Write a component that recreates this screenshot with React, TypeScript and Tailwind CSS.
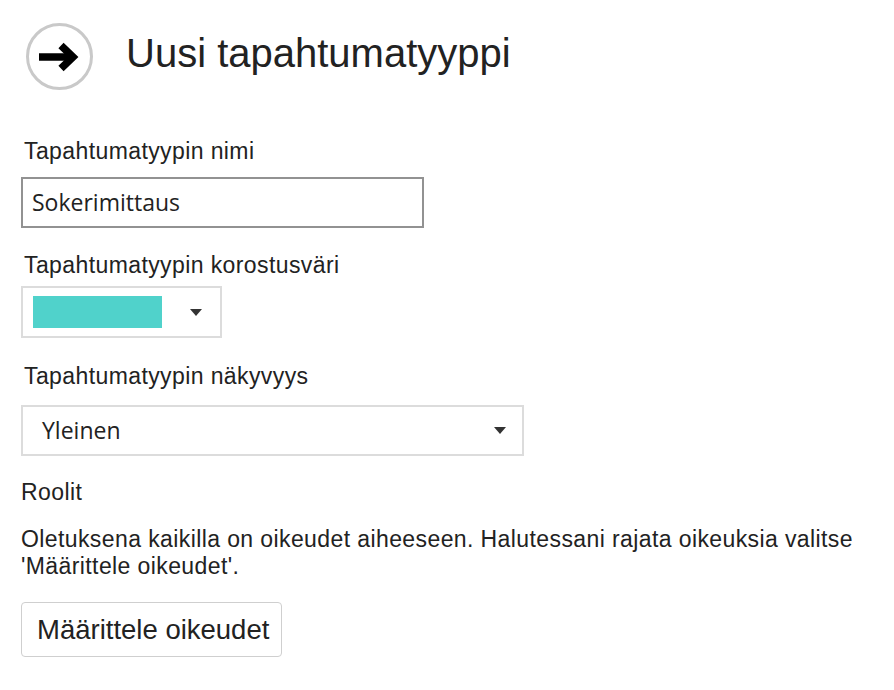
const label = "ml-[3px] text-[23px] leading-[26px] tracking-[0.4px] text-[#222]"
const value = "font-[family-name:Open_Sans,sans-serif] text-[23px] text-[#222]"

function Caret() {
    return (
        <svg width="12" height="7" viewBox="0 0 12 7" className="shrink-0">
            <path d="M0 0 H12 L6 7 Z" fill="#333" />
        </svg>
    )
}

function ArrowBadge() {
    return (
        <svg width="67" height="67" viewBox="0 0 67 67" className="shrink-0">
            <circle cx="33.5" cy="33.5" r="32" fill="#fff" stroke="#c9c9c9" strokeWidth="3" />
            <path d="M13 34 H46" stroke="#000" strokeWidth="7.5" />
            <path d="M35 22.5 L47 34 L35 45.5" fill="none" stroke="#000" strokeWidth="7.5" strokeLinejoin="miter" />
        </svg>
    )
}

export default function App() {
    return (
        <div className="min-h-[690px] w-[894px] bg-white pl-[21px] font-[family-name:Liberation_Sans,Arial,sans-serif]">
            {/* Header */}
            <div className="flex items-start">
                <div className="mt-[23px] ml-[5px]">
                    <ArrowBadge />
                </div>
                <h1 className="mt-[29px] ml-[33px] text-[40px] leading-[48px] font-normal text-[#222]">
                    Uusi tapahtumatyyppi
                </h1>
            </div>

            {/* Name */}
            <div className="mt-[48px] flex flex-col">
                <label className={label}>Tapahtumatyypin nimi</label>
                <div className="mt-[13px] flex h-[51px] w-[403px] items-center border-2 border-[#929292] pl-[9px]">
                    <span className={value}>Sokerimittaus</span>
                </div>
            </div>

            {/* Colour */}
            <div className="mt-[24px] flex flex-col">
                <label className={label}>Tapahtumatyypin korostusväri</label>
                <div className="mt-[8px] flex h-[52px] w-[201px] items-center border-2 border-[#dcdcdc] pl-[10px] pr-[18px]">
                    <div className="h-[32px] w-[129px] bg-[#50d2cb]" />
                    <div className="ml-auto">
                        <Caret />
                    </div>
                </div>
            </div>

            {/* Visibility */}
            <div className="mt-[25px] flex flex-col">
                <label className={label}>Tapahtumatyypin näkyvyys</label>
                <div className="mt-[16px] flex h-[51px] w-[503px] items-center border-2 border-[#dcdcdc] pl-[19px] pr-[16px]">
                    <span className={value}>Yleinen</span>
                    <div className="ml-auto">
                        <Caret />
                    </div>
                </div>
            </div>

            {/* Roles */}
            <div className="mt-[23px] flex flex-col">
                <span className="text-[23px] leading-[26px] tracking-[0.4px] text-[#222]">Roolit</span>
                <p className="mt-[21px] text-[23px] leading-[27px] tracking-[0.4px] text-[#222]">
                    Oletuksena kaikilla on oikeudet aiheeseen. Halutessani rajata oikeuksia valitse
                    <br />
                    'Määrittele oikeudet'.
                </p>
                <button className="mt-[22px] flex h-[55px] w-[261px] items-center rounded-[4px] border border-[#cfcfcf] bg-white pl-[15px] text-[27.5px] text-[#222]">
                    Määrittele oikeudet
                </button>
            </div>
        </div>
    )
}
